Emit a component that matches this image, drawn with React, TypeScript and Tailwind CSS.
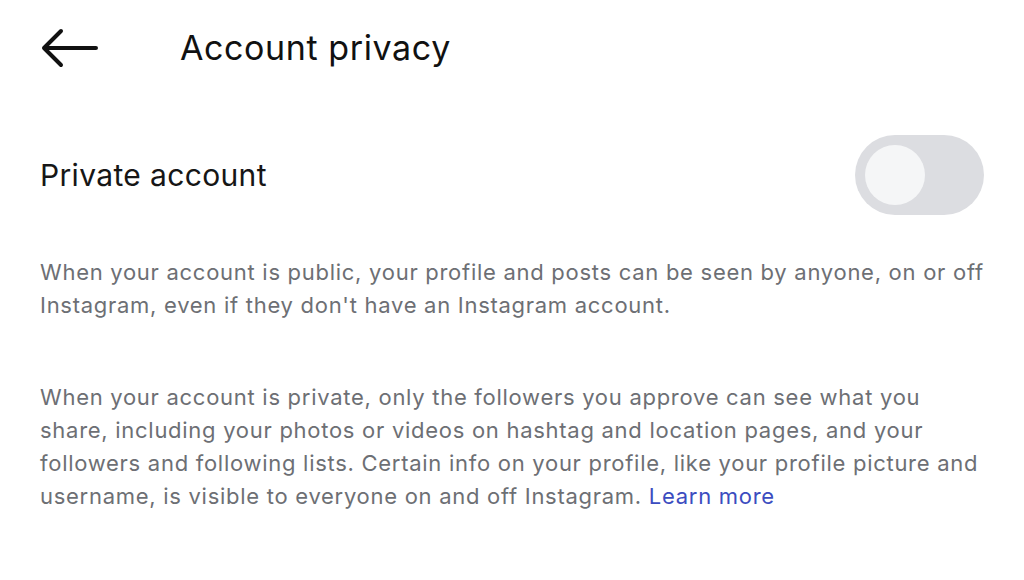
export default function App() {
  return (
    <div
      className="w-[1024px] h-[580px] bg-white overflow-hidden"
      style={{ fontFamily: 'Inter, "Noto Sans", sans-serif' }}
    >
      {/* Header */}
      <div className="flex items-center h-[96px] pl-[40px]">
        <svg width="58" height="40" viewBox="0 0 58 40" fill="none" className="shrink-0">
          <path
            d="M56 20H4M21 3L4 20l17 17"
            stroke="#111"
            strokeWidth="4"
            strokeLinecap="round"
            strokeLinejoin="round"
          />
        </svg>
        <h1 className="ml-[82px] text-[34px] text-[#111] leading-none tracking-[0.6px]">
          Account privacy
        </h1>
      </div>

      {/* Private account row */}
      <div className="flex items-center justify-between px-[40px] mt-[39px]">
        <span className="text-[30px] text-[#161616] leading-none tracking-[0.35px]">
          Private account
        </span>
        <div className="w-[129px] h-[80px] rounded-full bg-[#dcdde1] flex items-center pl-[10px]">
          <div className="w-[60px] h-[60px] rounded-full bg-[#f5f6f7]" />
        </div>
      </div>

      <div className="px-[40px] mt-[41px] text-[22px] leading-[33px] tracking-[0.72px] text-[#6d6f74] whitespace-nowrap">
        <p>
          When your account is public, your profile and posts can be seen by anyone, on or off
          <br />
          Instagram, even if they don't have an Instagram account.
        </p>
        <p className="mt-[59px]">
          When your account is private, only the followers you approve can see what you
          <br />
          share, including your photos or videos on hashtag and location pages, and your
          <br />
          followers and following lists. Certain info on your profile, like your profile picture and
          <br />
          username, is visible to everyone on and off Instagram.{" "}
          <span className="text-[#3b4cc0]">Learn more</span>
        </p>
      </div>
    </div>
  );
}
